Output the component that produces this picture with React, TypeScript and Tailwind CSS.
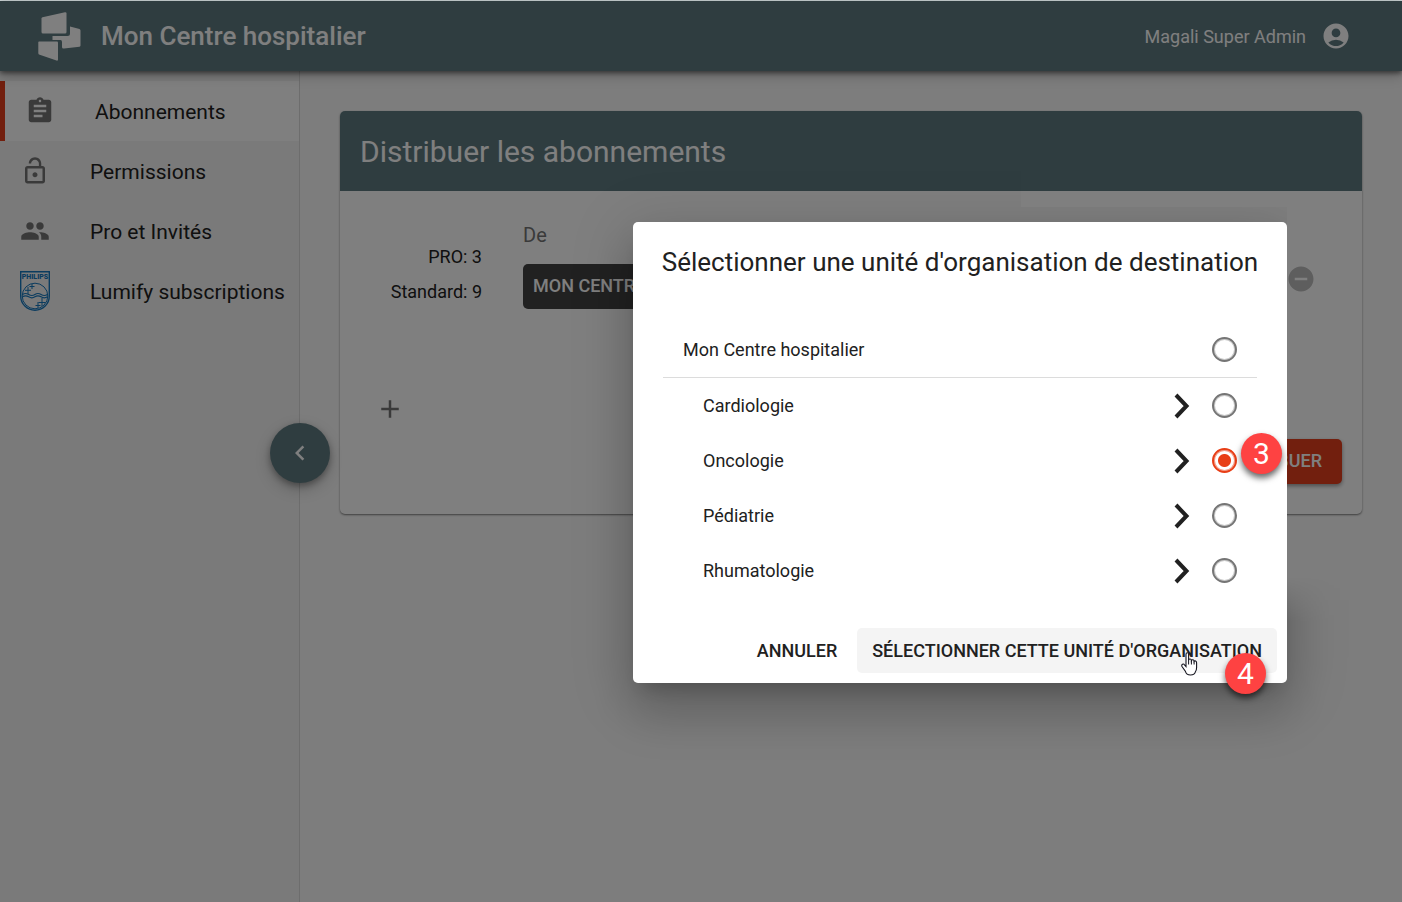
import { useState } from "react";
import type { ReactNode } from "react";
import {
  MdAccountCircle,
  MdAdd,
  MdAssignment,
  MdChevronLeft,
  MdGroup,
  MdLockOpen,
  MdRemoveCircle,
} from "react-icons/md";

function BrandLogo() {
  return (
    <svg className="h-[50px] w-[43px] shrink-0" viewBox="0 0 43 50" fill="#fff" aria-hidden="true">
      <path d="M3.5 7.500 Q3.500 6.500 4.500 6.200 L27 1.200 Q28.500 1 28.500 2.500 V21 Q28.500 22.500 27 22.500 H5 Q3.500 22.500 3.500 21 Z" />
      <path d="M32 15.500 L41.500 18 Q42.500 18.500 42.500 19.500 V34.500 Q42.500 35.500 41.500 35.700 L26 37.500 Q24 37.800 24 36 V31 Q24 29 22.500 29 H14.500 V25 H29.500 Q32 25 32 22.500 V16 Z" />
      <path d="M1 30.500 H19 Q20 30.500 20 31.500 V48.500 Q20 50 18.500 49.500 L1 43.500 Q.3 43 .3 42 V31.500 Q.3 30.500 1 30.500 Z" />
    </svg>
  );
}

function PhilipsShield() {
  return (
    <svg className="h-10 w-[30px]" viewBox="0 0 30 40" fill="none" stroke="#1778be" aria-hidden="true">
      <path d="M.7 .7H29.300V25a14.300 14.300 0 0 1-28.600 0Z" strokeWidth="1.400" />
      <text x="15" y="8" textAnchor="middle" fontSize="7" fontWeight="900" fill="#1778be" stroke="none" fontFamily="Roboto, sans-serif">
        PHILIPS
      </text>
      <circle cx="15" cy="25" r="12.800" />
      <path d="M2.500 23.500q3-2 6.200 0t6.200 0 6.200 0 6.300 0M2.500 25.800q3-2 6.200 0t6.200 0 6.200 0 6.300 0" strokeWidth="1.200" />
      <path d="M8 16v7M5 19.300h6M12 13v5M9.500 15.500h5M22 27v8M18.500 31.500h7M18 31v6M15.500 34.500h5" strokeWidth="1" />
    </svg>
  );
}

function HandCursor() {
  return (
    <svg className="h-6 w-[17px]" viewBox="0 0 17 24" aria-hidden="true">
      <path
        d="M5 14.500V2.500Q5 .8 6.300 .8T7.600 2.500V8Q8 6.800 9.200 7T10.400 8.500Q11 7.500 12 7.800T13.100 9.300Q13.700 8.600 14.600 9T15.600 10.700V15.500Q15.600 18 14.500 19.500Q13.800 23 9.500 23T4.500 19.500L1 14.500Q.3 13 1.500 12.300T3.500 12.800Z"
        fill="#fff"
        stroke="#15151f"
        strokeWidth="1.100"
      />
      <path d="M7.600 7.500v5M10.400 8.500v4M13.100 9.500v3" stroke="#15151f" strokeWidth="1" />
    </svg>
  );
}

function Header() {
  return (
    <header className="relative z-10 flex h-[70px] shrink-0 items-center justify-between bg-[#5f7b81] pr-[51px] pl-[38px] text-white shadow-[0_2px_5px_rgba(0,0,0,0.5),0_5px_12px_rgba(0,0,0,0.2)]">
      <div className="flex items-center gap-5">
        <BrandLogo />
        <h1 className="text-[26px] font-medium">Mon Centre hospitalier</h1>
      </div>
      <button type="button" className="flex items-center gap-[15px] text-[18px]">
        Magali Super Admin
        <MdAccountCircle className="size-[30px]" />
      </button>
    </header>
  );
}

function NavItem({ icon, label, active }: { icon: ReactNode; label: string; active?: boolean }) {
  return (
    <li>
      <a
        href="#"
        aria-current={active ? "page" : undefined}
        className={
          active
            ? "flex h-[60px] items-center border-l-[5px] border-[#e43e1c] bg-white pl-5"
            : "flex h-[60px] items-center pl-5"
        }
      >
        <span className="flex w-[70px] shrink-0 text-[#757575]">{icon}</span>
        <span className="pt-[3px] text-[21px] whitespace-nowrap text-[#212121]">{label}</span>
      </a>
    </li>
  );
}

function Sidebar() {
  return (
    <aside className="relative flex w-[300px] shrink-0 items-start border-r border-[#dadada] bg-[#f4f4f4] pt-[10px]">
      <nav className="w-full" aria-label="Navigation principale">
        <ul>
          <NavItem active icon={<MdAssignment className="size-[30px]" />} label="Abonnements" />
          <NavItem icon={<MdLockOpen className="size-[30px]" />} label="Permissions" />
          <NavItem icon={<MdGroup className="size-[30px]" />} label="Pro et Invités" />
          <NavItem icon={<PhilipsShield />} label="Lumify subscriptions" />
        </ul>
      </nav>
      <button
        type="button"
        aria-label="Réduire le menu"
        className="absolute top-[352px] -right-[31px] z-10 flex size-[60px] items-center justify-center rounded-full bg-[#5f7b81] text-white shadow-[0_3px_6px_rgba(0,0,0,0.3),0_6px_16px_rgba(0,0,0,0.2)]"
      >
        <MdChevronLeft className="size-[30px]" />
      </button>
    </aside>
  );
}

function DistributionCard() {
  return (
    <section className="overflow-hidden rounded-[5px] bg-white shadow-[0_1px_2px_rgba(0,0,0,0.5)]">
      <h2 className="flex h-20 items-center bg-[#5f7b81] px-5 text-[30px] text-white">Distribuer les abonnements</h2>
      <div className="flex h-[323px] flex-col px-5 pt-[27px] pb-[30px]">
        <div className="flex items-start">
          <div className="w-[122px] pt-[21px] text-right text-[18px] leading-[35px] text-[#212121]">
            <p>PRO: 3</p>
            <p>Standard: 9</p>
          </div>
          <div className="ml-[41px] flex w-[511px] flex-col items-start gap-[12px]">
            <p className="text-[20px] leading-[34px] text-[#757575]">De</p>
            <button
              type="button"
              className="h-[45px] rounded-[5px] bg-[#424242] px-[10px] pb-[2px] text-[18px] font-medium whitespace-nowrap text-white"
            >
              MON CENTRE HOSPITALIER
            </button>
          </div>
          <p className="text-[20px] leading-[32px] text-[#757575]">À</p>
          <button type="button" aria-label="Retirer" className="mt-[46px] mr-[26px] ml-auto text-[#bdbdbd]">
            <MdRemoveCircle className="size-[30px]" />
          </button>
        </div>
        <button type="button" aria-label="Ajouter" className="mt-auto ml-[15px] self-start text-[#757575]">
          <MdAdd className="size-[30px]" />
        </button>
        <button
          type="button"
          className="mt-[15px] h-[45px] shrink-0 self-end rounded-[5px] bg-[#e43e1c] px-5 pb-[2px] text-[18px] font-medium text-white shadow-[0_2px_4px_rgba(0,0,0,0.4)]"
        >
          DISTRIBUER
        </button>
      </div>
    </section>
  );
}

function StepBadge({ children }: { children: string }) {
  return (
    <span className="flex size-[41px] items-center justify-center rounded-full bg-[#fe4242] text-[30px] text-white shadow-[0_4px_6px_rgba(0,0,0,0.6)]">
      {children}
    </span>
  );
}

const ROOT_UNIT = "Mon Centre hospitalier";
const UNITS = ["Cardiologie", "Oncologie", "Pédiatrie", "Rhumatologie"];

function UnitRadio({ unit, selected, onSelect }: { unit: string; selected: string; onSelect: (unit: string) => void }) {
  return (
    <input
      id={unit}
      type="radio"
      name="unit"
      checked={selected === unit}
      onChange={() => onSelect(unit)}
      className="size-[25px] shrink-0 appearance-none rounded-full border-2 border-[#757575] shadow-[inset_0_0_0_1px_#75757566] checked:border-[#e83e16] checked:bg-[radial-gradient(circle,#e83e16_6px,transparent_7px)] checked:shadow-[inset_0_0_0_1px_#e83e1688]"
    />
  );
}

function UnitDialog() {
  const [selected, setSelected] = useState("Oncologie");
  return (
    <div
      role="dialog"
      aria-modal="true"
      aria-labelledby="dialog-title"
      className="relative w-[654px] text-[#212121]"
    >
      <div
        aria-hidden="true"
        className="absolute -inset-[100px] p-[100px] [mask:linear-gradient(#000,#000)_0_0/488px_100%_no-repeat,linear-gradient(transparent_85px,#000_85px)_488px_0/266px_100%_no-repeat,linear-gradient(transparent_455px,#000_500px)_100%_0/100px_100%_no-repeat]"
      >
        <div className="h-full rounded-[5px] shadow-[0_14px_19px_-9px_rgba(0,0,0,0.2),0_30px_48px_4px_rgba(0,0,0,0.14),0_11px_58px_10px_rgba(0,0,0,0.12)]" />
      </div>
      <div className="relative rounded-[5px] bg-white">
        <h2 id="dialog-title" className="px-5 pt-5 text-center text-[26px] leading-[40px] whitespace-nowrap">
          Sélectionner une unité d'organisation de destination
        </h2>
        <div className="px-[30px] pt-10 text-[18px]">
          <div className="flex h-14 items-center justify-between border-b border-[#dcdcdc] px-5">
            <label htmlFor={ROOT_UNIT}>{ROOT_UNIT}</label>
            <UnitRadio unit={ROOT_UNIT} selected={selected} onSelect={setSelected} />
          </div>
          <ul>
            {UNITS.map((unit) => (
              <li key={unit} className="relative flex h-[55px] items-center pr-5 pl-10">
                <label htmlFor={unit}>{unit}</label>
                <button type="button" aria-label={"Ouvrir " + unit} className="mr-[22px] ml-auto">
                  <svg className="h-[26px] w-4" viewBox="0 0 16 26" fill="none" stroke="#212121" strokeWidth="4" aria-hidden="true">
                    <path d="M2 2 12.500 13 2 24" />
                  </svg>
                </button>
                <UnitRadio unit={unit} selected={selected} onSelect={setSelected} />
                {unit === "Oncologie" && (
                  <span className="absolute top-0 -right-[25px]">
                    <StepBadge>3</StepBadge>
                  </span>
                )}
              </li>
            ))}
          </ul>
        </div>
        <div className="flex justify-end gap-[10px] px-[10px] pt-[30px] pb-[10px] text-[18px] font-medium">
          <button type="button" className="h-[45px] px-[10px]">
            ANNULER
          </button>
          <button type="button" className="h-[45px] rounded-[5px] bg-[#f4f4f4] px-[15px] whitespace-nowrap">
            SÉLECTIONNER CETTE UNITÉ D'ORGANISATION
          </button>
        </div>
      </div>
      <span className="absolute right-[89px] bottom-[7px]">
        <HandCursor />
      </span>
      <span className="absolute right-[21px] -bottom-[11px]">
        <StepBadge>4</StepBadge>
      </span>
    </div>
  );
}

export default function App() {
  return (
    <div className="flex min-h-screen flex-col border-t border-[#d3dcdd] bg-[#fafafa] font-['Roboto',sans-serif]">
      <div className="relative flex flex-1 flex-col">
        <Header />
        <div className="flex flex-1">
          <Sidebar />
          <main className="flex-1 p-10">
            <DistributionCard />
          </main>
        </div>
        <div className="absolute inset-0 z-20 flex items-center justify-end bg-black/50 pt-[2px] pr-[115px]">
          <UnitDialog />
        </div>
      </div>
    </div>
  );
}
